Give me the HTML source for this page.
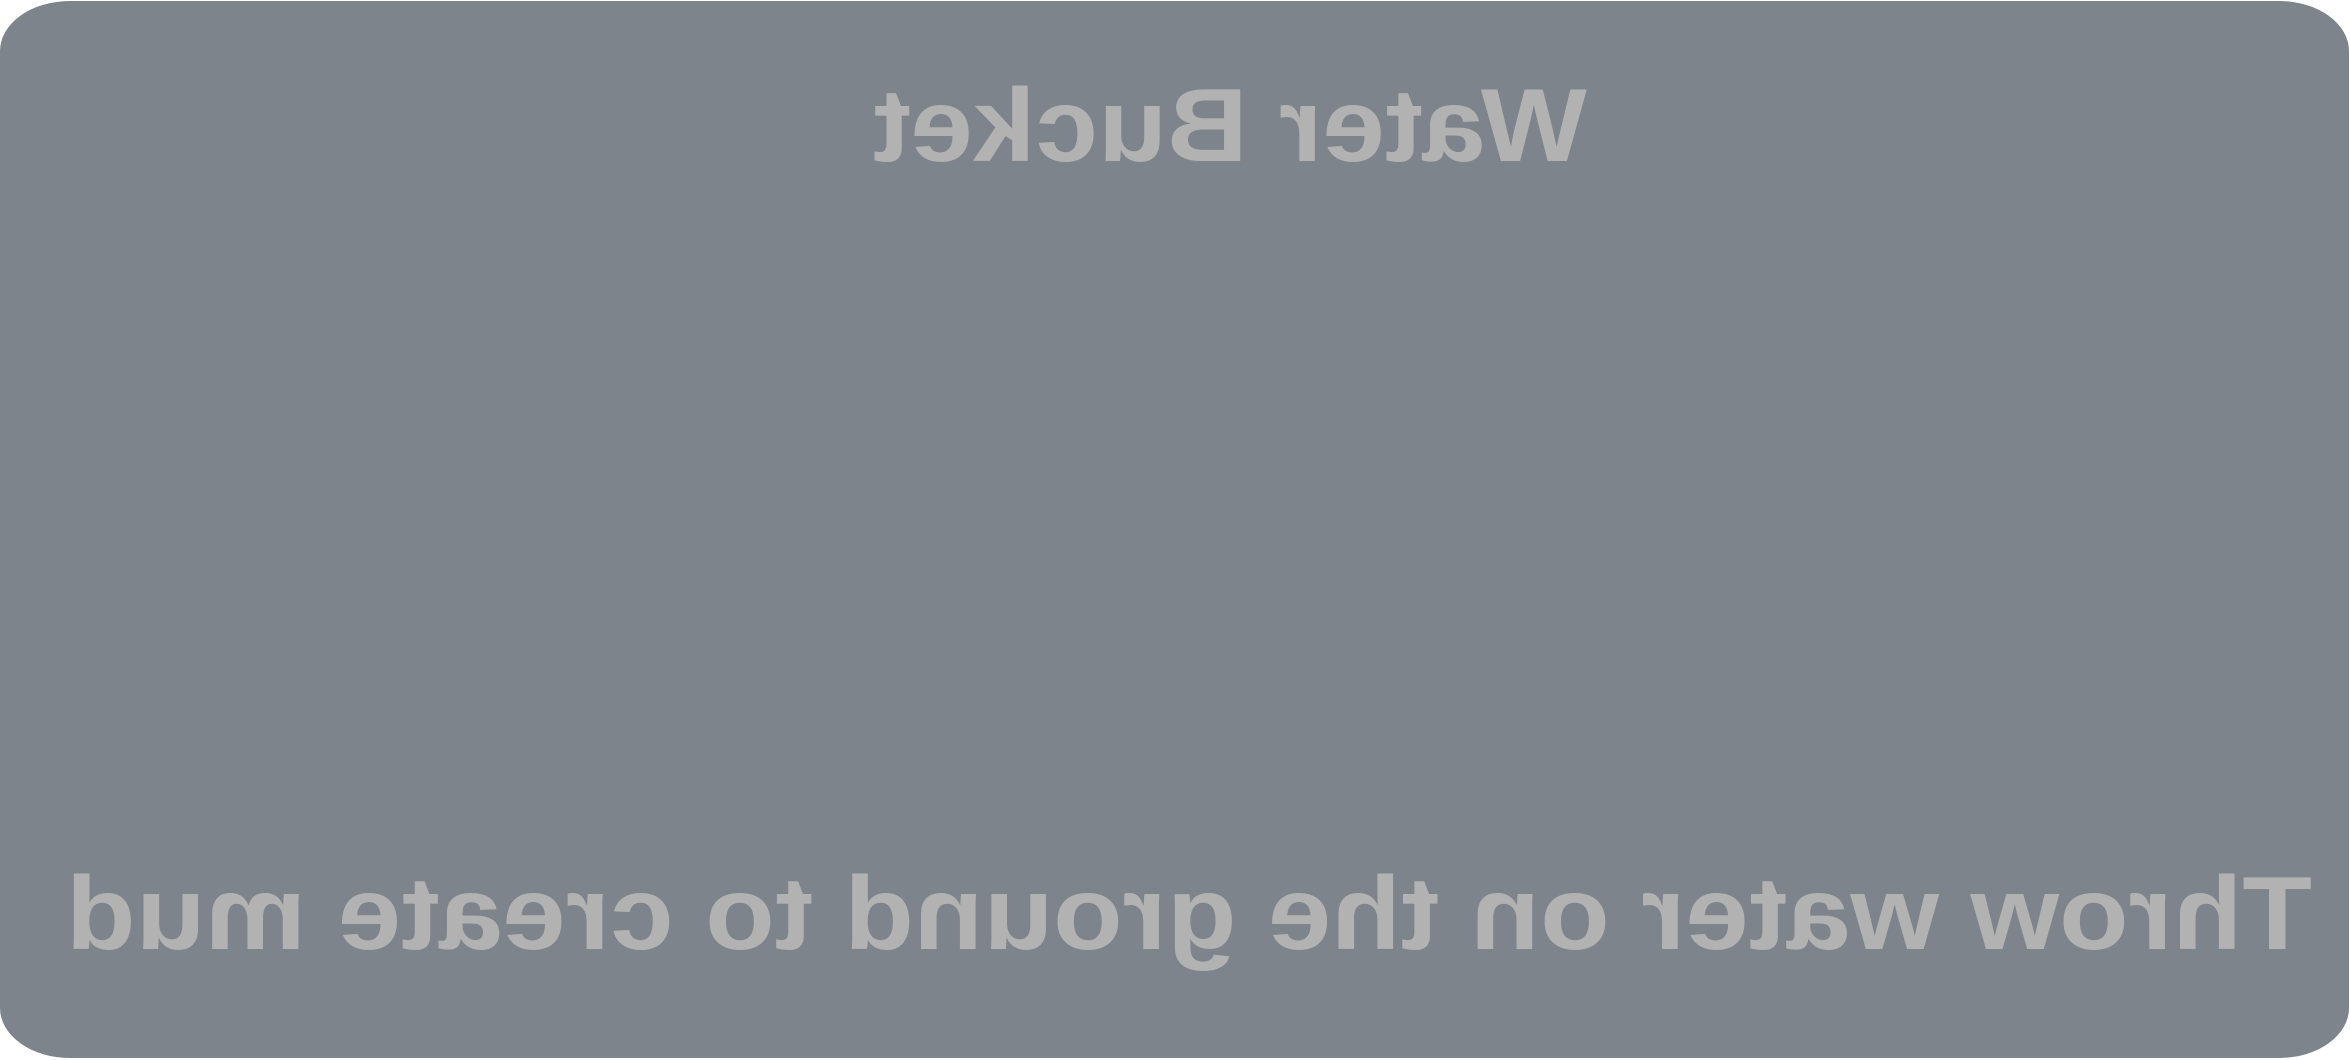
<!DOCTYPE html>
<html><head><meta charset="utf-8"><style>
html,body{margin:0;padding:0;background:#fff;width:2350px;height:1060px;overflow:hidden}
.card{position:absolute;left:0;top:1px;width:2349px;height:1057px;background:#7e848c;border-radius:70px/50px}
.t{position:absolute;font-family:"Liberation Sans",sans-serif;font-weight:bold;color:#b2b2b2;font-size:104px;line-height:1;white-space:nowrap;transform-origin:center center}
#a{left:0;top:74px;width:2460px;text-align:center;transform:scaleX(-1.08)}
#b{top:862px;text-align:center;width:2378px;left:0;transform:scaleX(-1.095)}
</style></head><body>
<div class="card"></div>
<div class="t" id="a">Water Bucket</div>
<div class="t" id="b">Throw water on the ground to create mud</div>
</body></html>
